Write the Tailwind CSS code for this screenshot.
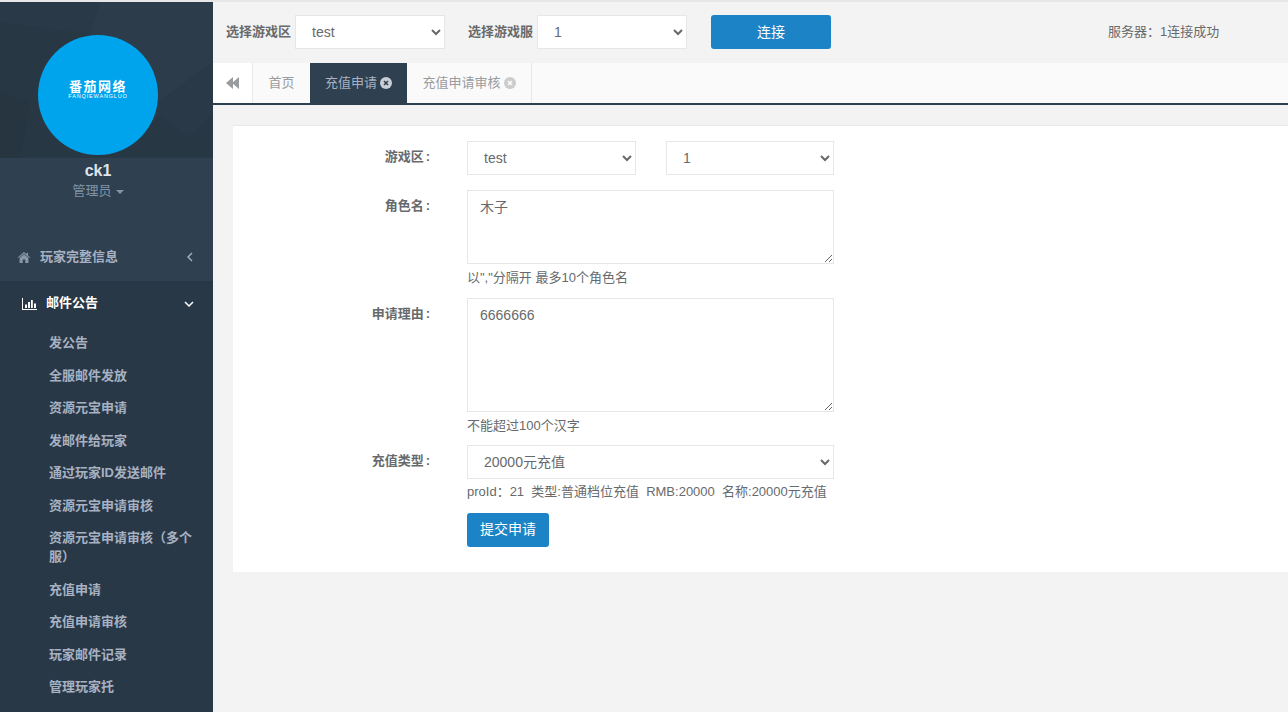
<!DOCTYPE html>
<html lang="zh-CN">
<head>
  <meta charset="UTF-8">
  <title>充值申请</title>
  <script src="https://cdn.jsdelivr.net/npm/@tailwindcss/browser@4"></script>
</head>
<body class="h-[712px] overflow-hidden bg-[#f3f3f3] text-[13px] leading-[18.57px] text-[#676a6c] font-['Liberation_Sans','Noto_Sans_CJK_SC',sans-serif]">
  <div class="h-[2px] bg-[#e7e7e7]"></div>
  <div class="flex h-[710px]">
    <!-- sidebar -->
    <aside class="w-[213px] shrink-0 overflow-hidden bg-[#293846] font-bold text-[#a7b1c2]">
      <div class="relative h-[156px] overflow-hidden bg-[#283744]">
        <svg class="absolute inset-0" width="213" height="156" viewBox="0 0 213 156">
          <polygon points="0,20 110,35 100,0 0,0" fill="#2a3947"/>
          <polygon points="100,0 213,0 213,60 150,120 90,30" fill="#2c3c4a"/>
          <polygon points="150,105 190,135 213,110 213,60" fill="#2a3947"/>
          <polygon points="0,90 30,100 20,156 0,156" fill="#273541"/>
        </svg>
        <div class="relative mt-[33px] ml-[38px] flex h-[120px] w-[120px] flex-col items-center justify-center rounded-full bg-[#00a4ec] pb-[12px] text-white">
          <span class="text-[13px] leading-[13px] font-bold tracking-[1.5px]">番茄网络</span>
          <span class="text-[5.5px] leading-[6px] font-normal tracking-[0.85px]">FANQIEWANGLUO</span>
        </div>
      </div>
      <div class="h-[77px] bg-[#2f4050] pt-[3px] pr-[17px] text-center">
        <div class="text-[16px] leading-[20px] text-[#dfe4ed]">ck1</div>
        <div class="flex items-center justify-center gap-1 pt-[1px] font-normal text-[#8095a8]">
          管理员
          <span class="mt-[2px] h-0 w-0 border-x-4 border-t-4 border-x-transparent border-t-[#8095a8]"></span>
        </div>
      </div>
      <div class="flex h-[46px] items-center bg-[#2f4050] pr-[20px] pb-[2px] pl-[18px]">
        <svg class="mr-[10px] shrink-0" width="12" height="11" viewBox="0 0 12 11" fill="#8b98ab"><path d="M6 0 0 5.200l.7.8L6 1.400 11.300 6l.7-.8-2-1.800V.8H8.600v1.400z"/><path d="M1.600 6 6 2.200 10.400 6v5H7.300V7.600H4.700V11H1.600z"/></svg>
        <span class="flex-1">玩家完整信息</span>
        <svg width="6" height="10" viewBox="0 0 6 10" fill="none" stroke="#a7b1c2" stroke-width="1.4"><path d="M5 1 1 5l4 4"/></svg>
      </div>
      <div class="flex h-[46px] items-center pr-[19px] pb-[1px] pl-[22px] text-white">
        <svg class="mr-[9px] shrink-0" width="15" height="12" viewBox="0 0 15 12" fill="#fff"><path d="M0 0h1v11h14v1H0z"/><path d="M3 6.500h2V10H3zM6 4h2v6H6zM9 2h1.800v8H9zM12 5.500h2V10h-2z"/></svg>
        <span class="flex-1">邮件公告</span>
        <svg width="10" height="6" viewBox="0 0 10 6" fill="none" stroke="#fff" stroke-width="1.5"><path d="m1 1 4 4 4-4"/></svg>
      </div>
      <ul>
        <li class="py-[7px] pr-[15px] pl-[49px]">发公告</li>
        <li class="py-[7px] pr-[15px] pl-[49px]">全服邮件发放</li>
        <li class="py-[7px] pr-[15px] pl-[49px]">资源元宝申请</li>
        <li class="py-[7px] pr-[15px] pl-[49px]">发邮件给玩家</li>
        <li class="py-[7px] pr-[15px] pl-[49px]">通过玩家ID发送邮件</li>
        <li class="py-[7px] pr-[15px] pl-[49px]">资源元宝申请审核</li>
        <li class="py-[7px] pr-[15px] pl-[49px]">资源元宝申请审核（多个服）</li>
        <li class="py-[7px] pr-[15px] pl-[49px]">充值申请</li>
        <li class="py-[7px] pr-[15px] pl-[49px]">充值申请审核</li>
        <li class="py-[7px] pr-[15px] pl-[49px]">玩家邮件记录</li>
        <li class="py-[7px] pr-[15px] pl-[49px]">管理玩家托</li>
      </ul>
    </aside>

    <main class="min-w-0 flex-1">
      <!-- server picker -->
      <div class="flex h-[61px] items-center pb-[1px] pl-[13px]">
        <label class="mr-[4px] font-bold">选择游戏区</label>
        <select class="h-[34px] w-[150px] border border-[#e5e6e7] bg-white px-3 text-[14px] text-[#676a6c]"><option>test</option></select>
        <label class="mr-[4px] ml-[23px] font-bold">选择游戏服</label>
        <select class="h-[34px] w-[150px] border border-[#e5e6e7] bg-white px-3 text-[14px] text-[#676a6c]"><option>1</option></select>
        <button class="ml-[24px] h-[34px] w-[120px] rounded-[3px] bg-[#1c84c6] text-[14px] text-white">连接</button>
        <span class="ml-[277px]">服务器：1连接成功</span>
      </div>

      <!-- tabs -->
      <div class="flex h-[42px] border-b-2 border-[#2f4050] bg-[#fafafa]">
        <div class="flex w-[40px] items-center justify-center border-r border-[#e7eaec] bg-white">
          <svg width="13" height="12" viewBox="0 0 13 12" fill="#999c9e"><path d="M7 0v12L0 6zM13 0v12L6 6z"/></svg>
        </div>
        <div class="flex w-[57px] items-center justify-center text-[#999c9e]">首页</div>
        <div class="flex w-[97px] items-center justify-center gap-[3px] bg-[#2f4050] text-[#a7b1c2]">
          充值申请
          <svg width="12" height="12" viewBox="0 0 12 12"><circle cx="6" cy="6" r="6" fill="#c8cdd6"/><path d="m4 4 4 4m0-4-4 4" stroke="#2f4050" stroke-width="1.6"/></svg>
        </div>
        <div class="flex w-[125px] items-center justify-center gap-[3px] border-r border-[#e7eaec] text-[#999c9e]">
          充值申请审核
          <svg width="12" height="12" viewBox="0 0 12 12"><circle cx="6" cy="6" r="6" fill="#ccc"/><path d="m4 4 4 4m0-4-4 4" stroke="#fafafa" stroke-width="1.6"/></svg>
        </div>
      </div>

      <!-- form -->
      <div class="mt-[20px] ml-[20px] h-[447px] border-t border-[#e7eaec] bg-white pt-[15px]">
        <div class="flex">
          <label class="w-[197px] pt-[7px] text-right font-bold">游戏区<span class="ml-[2px]">:</span></label>
          <div class="ml-[37px] flex gap-[30px]">
            <select class="h-[34px] w-[169px] border border-[#e5e6e7] bg-white px-3 text-[14px] text-[#676a6c]"><option>test</option></select>
            <select class="h-[34px] w-[168px] border border-[#e5e6e7] bg-white px-3 text-[14px] text-[#676a6c]"><option>1</option></select>
          </div>
        </div>
        <div class="mt-[15px] flex">
          <label class="w-[197px] pt-[7px] text-right font-bold">角色名<span class="ml-[2px]">:</span></label>
          <div class="ml-[37px] w-[367px]">
            <textarea class="block h-[74px] w-full border border-[#e5e6e7] bg-white px-3 py-[6px] text-[14px] leading-[20px] text-[#676a6c]">木子</textarea>
            <p class="mt-[5px] mb-[10px]">以","分隔开 最多10个角色名</p>
          </div>
        </div>
        <div class="flex">
          <label class="w-[197px] pt-[7px] text-right font-bold">申请理由<span class="ml-[2px]">:</span></label>
          <div class="ml-[37px] w-[367px]">
            <textarea class="block h-[114px] w-full border border-[#e5e6e7] bg-white px-3 py-[6px] text-[14px] leading-[20px] text-[#676a6c]">6666666</textarea>
            <p class="mt-[5px] mb-[10px]">不能超过100个汉字</p>
          </div>
        </div>
        <div class="flex">
          <label class="w-[197px] pt-[7px] text-right font-bold">充值类型<span class="ml-[2px]">:</span></label>
          <div class="ml-[37px] w-[367px]">
            <select class="block h-[34px] w-full border border-[#e5e6e7] bg-white px-3 text-[14px] text-[#676a6c]"><option>20000元充值</option></select>
            <p class="mt-[4px] whitespace-pre">proId：21  类型:普通档位充值  RMB:20000  名称:20000元充值</p>
            <button class="mt-[11px] h-[34px] w-[82px] rounded-[3px] bg-[#1c84c6] text-[14px] text-white">提交申请</button>
          </div>
        </div>
      </div>
    </main>
  </div>
</body>
</html>
